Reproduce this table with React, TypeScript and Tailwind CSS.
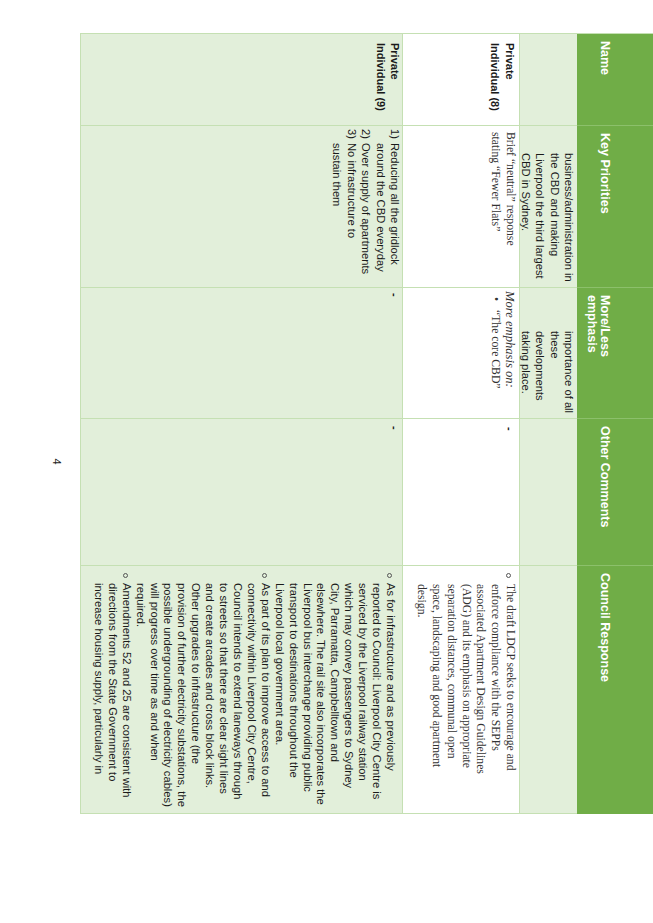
import React from "react";

const sans = { fontFamily: '"Liberation Sans", Arial, sans-serif' };
const serif = { fontFamily: '"Liberation Serif", "Times New Roman", serif' };

function Lines({ lines, className = "" }: { lines: string[]; className?: string }) {
  return (
    <div className={className}>
      {lines.map((l, i) => (
        <div key={i} className="whitespace-nowrap">
          {l}
        </div>
      ))}
    </div>
  );
}

function Circle() {
  return <span className="inline-block w-[5px] h-[5px] rounded-full border border-[#555]" />;
}

const hdr = "bg-[#70AD47] text-white font-bold text-[12.5px] leading-[13px] pt-[42px] pl-[7px] border-r border-[#8cc06b]";
const cellG = "bg-[#E2EFDA] border-r border-b border-[#C5E0B3]";
const cellW = "bg-white border-r border-b border-[#C5E0B3]";

export default function App() {
  return (
    <div className="relative w-[653px] h-[923px] overflow-hidden bg-white" style={sans}>
      <div className="absolute left-0 top-0 w-[923px] h-[653px] origin-top-left rotate-90 translate-x-[653px] flex flex-col">
        <div className="pl-[33px]">
          <div className="grid grid-cols-[92px_162px_131px_147px_248px] grid-rows-[76px_58px_117px_322px] text-[#1a1a1a] border-l border-[#C5E0B3]">
            {/* header */}
            <div className={hdr}>Name</div>
            <div className={hdr}>Key Priorities</div>
            <div className={hdr + " pl-[5px]"}>
              <div>More/Less</div>
              <div>emphasis</div>
            </div>
            <div className={hdr}>Other Comments</div>
            <div className={hdr + " pl-[5px] border-r-0"}>Council Response</div>

            {/* row 1 */}
            <div className={cellG}></div>
            <div className={cellG + " pl-[27px] pt-[1px] text-[11.2px] leading-[14.3px]"}>
              <Lines lines={["business/administration in", "the CBD and making", "Liverpool the third largest", "CBD in Sydney."]} />
            </div>
            <div className={cellG + " pl-[43px] pt-[1px] text-[11.2px] leading-[14.3px]"}>
              <Lines lines={["importance of all", "these", "developments", "taking place."]} />
            </div>
            <div className={cellG}></div>
            <div className={cellG}></div>

            {/* row 2 */}
            <div className={cellW + " pl-[9px] pt-[2px] font-bold text-[11px] leading-[14.5px]"}>
              <div>Private</div>
              <div>Individual (8)</div>
            </div>
            <div className={cellW + " pl-[6px] pt-[2px] text-[11.7px] leading-[14.5px] text-[#333]"} style={serif}>
              <Lines lines={["Brief \u201cneutral\u201d response", "stating \u201cFewer Flats\u201d"]} />
            </div>
            <div className={cellW + " pl-[3px] pt-[2px] text-[11.7px] leading-[14.5px] text-[#333]"} style={serif}>
              <div className="italic whitespace-nowrap text-[12.6px]">More emphasis on:</div>
              <div className="flex whitespace-nowrap">
                <span className="w-[19px] pl-[6px]">&#8226;</span>
                <span>{"\u201cThe core CBD\u201d"}</span>
              </div>
            </div>
            <div className={cellW + " pl-[8px] pt-[2px] text-[11px] leading-[14.5px] font-bold"}>-</div>
            <div className={cellW + " pt-[2px] text-[11.7px] leading-[14.8px] text-[#333] flex"} style={serif}>
              <div className="w-[18px] pl-[7px] pt-[1px]">
                <Circle />
              </div>
              <Lines
                lines={[
                  "The draft LDCP seeks to encourage and",
                  "enforce compliance with the SEPPs",
                  "associated Apartment Design Guidelines",
                  "(ADG) and its emphasis on appropriate",
                  "separation distances, communal open",
                  "space, landscaping and good apartment",
                  "design.",
                ]}
              />
            </div>

            {/* row 3 */}
            <div className={cellG + " pl-[9px] text-[11px] leading-[14.2px] font-bold"}>
              <div>Private</div>
              <div>Individual (9)</div>
            </div>
            <div className={cellG + " pl-[3px] text-[11.2px] leading-[14.4px]"}>
              <div className="flex">
                <span className="w-[14px]">1)</span>
                <Lines lines={["Reducing all the gridlock", "around the CBD everyday"]} />
              </div>
              <div className="flex">
                <span className="w-[14px]">2)</span>
                <Lines lines={["Over supply of apartments"]} />
              </div>
              <div className="flex">
                <span className="w-[14px]">3)</span>
                <Lines lines={["No infrastructure to", "sustain them"]} />
              </div>
            </div>
            <div className={cellG + " pl-[5px] text-[11px] leading-[14.2px] font-bold"}>-</div>
            <div className={cellG + " pl-[7px] text-[11px] leading-[14.2px] font-bold"}>-</div>
            <div className={cellG + " pt-[5px] text-[11.2px] leading-[13.9px]"}>
              <div className="flex">
                <div className="w-[17px] pl-[7px]">
                  <Circle />
                </div>
                <Lines
                  lines={[
                    "As for infrastructure and as previously",
                    "reported to Council: Liverpool City Centre is",
                    "serviced by the Liverpool railway station",
                    "which may convey passengers to Sydney",
                    "City, Parramatta, Campbelltown and",
                    "elsewhere. The rail site also incorporates the",
                    "Liverpool bus interchange providing public",
                    "transport to destinations throughout the",
                    "Liverpool local government area.",
                  ]}
                />
              </div>
              <div className="flex">
                <div className="w-[17px] pl-[7px]">
                  <Circle />
                </div>
                <Lines
                  lines={[
                    "As part of its plan to improve access to and",
                    "connectivity within Liverpool City Centre,",
                    "Council intends to extend laneways through",
                    "to streets so that there are clear sight lines",
                    "and create arcades and cross block links.",
                    "Other upgrades to infrastructure (the",
                    "provision of further electricity substations, the",
                    "possible undergrounding of electricity cables)",
                    "will progress over time as and when",
                    "required.",
                  ]}
                />
              </div>
              <div className="flex">
                <div className="w-[17px] pl-[7px]">
                  <Circle />
                </div>
                <Lines
                  lines={[
                    "Amendments 52 and 25 are consistent with",
                    "directions from the State Government to",
                    "increase housing supply, particularly in",
                  ]}
                />
              </div>
            </div>
          </div>
        </div>
        <div className="mt-[16px] text-center text-[11px] leading-[14px] text-[#222]">4</div>
      </div>
    </div>
  );
}
